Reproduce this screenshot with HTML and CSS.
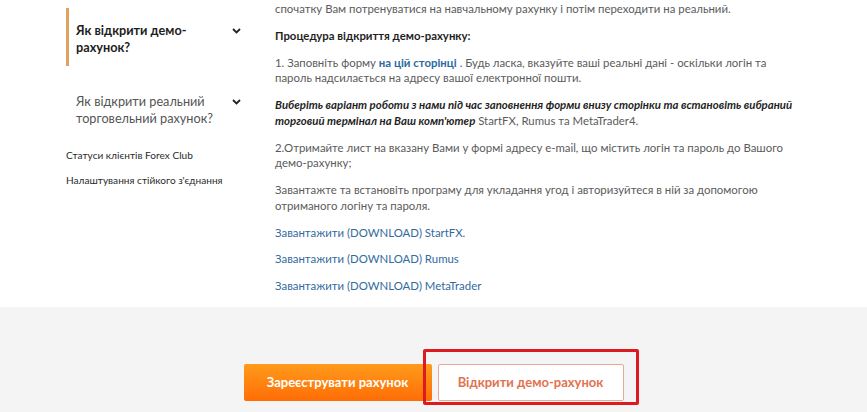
FILE: index.html
```html
<!DOCTYPE html>
<html lang="uk">
<head>
<meta charset="utf-8">
<link rel="stylesheet" href="styles.css">
</head>
<body>
<div class="page">
  <div class="content-wrap">
    <aside class="sidebar">
      <div class="acc-item active">
        <span class="acc-title">Як відкрити демо-рахунок?</span>
        <svg class="chev" width="9" height="6" viewBox="0 0 9 6"><path d="M1 1 L4.5 4.5 L8 1" fill="none" stroke="#222" stroke-width="1.8"/></svg>
      </div>
      <div class="acc-item">
        <span class="acc-title">Як відкрити реальний торговельний рахунок?</span>
        <svg class="chev" width="9" height="6" viewBox="0 0 9 6"><path d="M1 1 L4.5 4.5 L8 1" fill="none" stroke="#222" stroke-width="1.8"/></svg>
      </div>
      <a class="side-link first" href="#">Статуси клієнтів Forex Club</a>
      <a class="side-link" href="#">Налаштування стійкого з'єднання</a>
    </aside>
    <main class="article">
      <p>спочатку Вам потренуватися на навчальному рахунку і потім переходити на реальний.</p>
      <p class="head">Процедура відкриття демо-рахунку:</p>
      <p>1. Заповніть форму <a class="inline-link" href="#">на цій сторінці</a> . Будь ласка, вказуйте ваші реальні дані - оскільки логін та пароль надсилається на адресу вашої електронної пошти.</p>
      <p><em class="bi">Виберіть варіант роботи з нами під час заповнення форми внизу сторінки та встановіть вибраний торговий термінал на Ваш комп'ютер</em> StartFX, Rumus та MetaTrader4.</p>
      <p>2.Отримайте лист на вказану Вами у формі адресу e-mail, що містить логін та пароль до Вашого демо-рахунку;</p>
      <p>Завантажте та встановіть програму для укладання угод і авторизуйтеся в ній за допомогою отриманого логіну та пароля.</p>
      <p><a class="dl" href="#">Завантажити (DOWNLOAD) StartFX.</a></p>
      <p><a class="dl" href="#">Завантажити (DOWNLOAD) Rumus</a></p>
      <p><a class="dl" href="#">Завантажити (DOWNLOAD) MetaTrader</a></p>
    </main>
  </div>
  <section class="cta">
    <a class="btn btn-primary" href="#">Зареєструвати рахунок</a>
    <span class="demo-wrap">
      <a class="btn btn-outline" href="#">Відкрити демо-рахунок</a>
      <span class="highlight"></span>
    </span>
  </section>
</div>
</body>
</html>
```
FILE: styles.css
```css
* { box-sizing: border-box; }
html, body { margin: 0; padding: 0; }
body {
  background: #fff;
  font-family: Lato, "Liberation Sans", Arial, sans-serif;
  color: #5b5b5b;
  width: 867px;
  height: 412px;
  overflow: hidden;
}
.page { display: flex; flex-direction: column; height: 412px; }
.content-wrap {
  display: flex;
  padding: 1px 0 13px 66px;
  background: #fff;
}
.sidebar {
  width: 209px;
  flex: none;
  display: flex;
  flex-direction: column;
  padding-top: 7px;
}
.acc-item {
  display: flex;
  align-items: flex-start;
  justify-content: space-between;
  padding: 14px 34px 10px 7px;
  border-left: 3px solid transparent;
  font-size: 12.7px;
  line-height: 17px;
  color: #555;
}
.acc-item.active {
  border-left-color: #e0a35f;
  color: #1d1d1d;
  font-weight: 700;
}
.acc-item + .acc-item { margin-top: 13px; }
.acc-title { width: 150px; }
.chev { margin-top: 6px; flex: none; }
.side-link {
  font-size: 10.1px;
  line-height: 14px;
  color: #2b2b2b;
  text-decoration: none;
  margin-top: 11px;
}
.article {
  width: 530px;
  font-size: 11.4px;
  line-height: 15.75px;
}
.article p { margin: 0 0 11px; }
.article p:last-child { margin-bottom: 0; }
.article .head { color: #1f1f1f; font-weight: 700; }
.inline-link { color: #2d6aa0; text-decoration: none; font-weight: 700; }
.bi { font-weight: 700; font-style: italic; color: #1f1f1f; }
.dl { color: #336a9e; text-decoration: none; }
.cta {
  flex: 1;
  background: #f4f4f5;
  display: flex;
  justify-content: center;
  align-items: flex-start;
  gap: 6px;
  padding-top: 57px;
}
.btn {
  display: flex;
  align-items: center;
  justify-content: center;
  height: 37px;
  border-radius: 2px;
  font-weight: 700;
  font-size: 13px;
  text-decoration: none;
}
.btn-primary {
  width: 188px;
  color: #fff;
  background: linear-gradient(180deg, #ff9b1c 0%, #ff6d05 100%);
}
.demo-wrap { position: relative; display: block; }
.btn-outline {
  width: 186px;
  color: #e2724f;
  background: #fff;
  border: 1px solid #e9a896;
}
.highlight {
  position: absolute;
  left: -15px;
  right: -15px;
  top: -15px;
  bottom: -4px;
  border: 3px solid #dd1a1f;
  border-radius: 2px;
  pointer-events: none;
}
```
